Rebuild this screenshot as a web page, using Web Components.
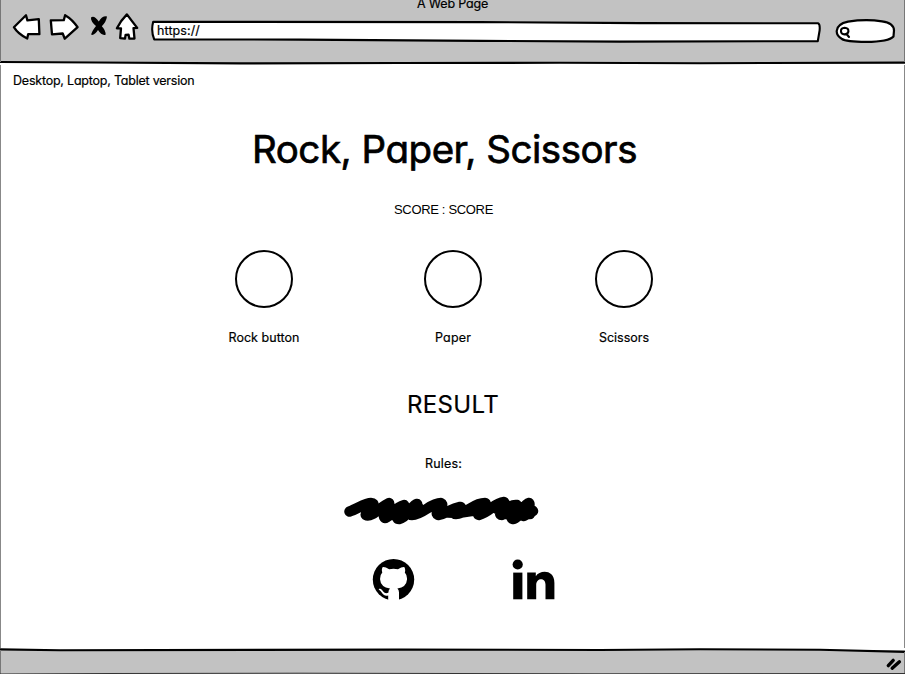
<!DOCTYPE html>
<html lang="en">
<head>
<meta charset="utf-8">
<title>A Web Page</title>
<style>
html,body{margin:0;height:674px;overflow:hidden;background:#fff}
body{font-family:Inter,"Liberation Sans",sans-serif;color:#000}
</style>
</head>
<body>
<wire-window></wire-window>
<script>
function define(name, html, ready) {
  const t = document.createElement('template');
  t.innerHTML = html;
  customElements.define(name, class extends HTMLElement {
    constructor() {
      super();
      this.attachShadow({mode: 'open'}).append(t.content.cloneNode(true));
    }
    connectedCallback() { if (ready) ready.call(this); }
  });
}

// One line of label text, tracked so that it spans the given width.
define('wire-text', `
<style>
:host{display:block;white-space:nowrap;font-size:12.5px;line-height:18px;font-feature-settings:"cv11" 1;-webkit-text-stroke:.2px #000}
:host([plain]){font-family:"Liberation Sans",sans-serif;font-size:13px;-webkit-text-stroke:0}
span{display:inline-block;white-space:pre}
</style><span><slot></slot></span>`, function () {
  const want = +this.getAttribute('span');
  this.style.width = want + 'px';
  const s = this.shadowRoot.querySelector('span');
  const n = this.textContent.length;
  s.style.letterSpacing = '0px';
  const w = s.getBoundingClientRect().width;
  if (w) s.style.letterSpacing = ((want - w) / n) + 'px';
});

define('wire-nav', `
<style>:host{display:block;width:128px;height:32px}svg{display:block}</style>
<svg width="128" height="32" viewBox="12 11 128 32" fill="#fff" stroke="#000" stroke-width="2.3" stroke-linejoin="round">
<path d="M13.9 27.2 26 15.3 27.4 20.4 38.8 19.1 39.4 34.2 28.2 34.1 27.2 38.5Q18 34 13.9 27.2Z"/>
<path d="M50.8 20.4 63.8 20.1 65.1 15.2Q72.3 19.4 77.6 27.2L64.8 38.7 62.7 33.5 52 34.3Z"/>
<path d="M126.9 14.4Q121 20.3 116.9 28.3L121 28.4 120.2 38.2 125 38.7 125.6 34.8 128.5 34.6 129.4 38.7 134.5 38.6 133.5 28.2 137.2 27.9Q131.8 21 126.9 14.4Z"/>
<path fill="#000" stroke="none" d="M91 17.4Q94.3 14.9 98.8 21.6 102 15.7 107 16.4 106.3 21.6 101.8 26.2 105.8 30.2 105.6 34.7 101.8 36 98 30.1 94.7 35.5 91.3 34.8 90.9 32.6 96 26 90.5 21.2 91 17.4Z"/>
</svg>`);

define('wire-address', `
<style>
:host{display:grid;width:672px;height:24px;grid-template:24px/672px}
svg,div{grid-area:1/1}div{padding:2px 0 0 7px}
</style>
<svg width="672" height="24" viewBox="150 20 672 24"><path fill="#fff" stroke="#000" stroke-width="2.1" stroke-linejoin="round" d="M153.2 21.8 480 22.1 640 23.1 818 23.3Q820.2 24 819.6 30.5L817.8 41.2 620 41.6 480 40.9 300 39.6 154.2 39.4Q150.7 31 153.2 21.8Z"/></svg>
<div><slot></slot></div>`);

define('wire-search', `
<style>:host{display:block;width:62px;height:26px}svg{display:block}</style>
<svg width="62" height="26" viewBox="834 18 62 26"><path fill="#fff" stroke="#000" stroke-width="2.2" d="M848 21.6Q866 18.8 882 21.3 894 23 894 30.5L893.5 36.4Q889 41.5 866 41.9 846 41.8 842 39 836.5 36 836.7 31 837 24 848 21.6Z"/>
<path fill="none" stroke="#000" stroke-width="2.1" stroke-linecap="round" d="M841 31.5Q840.6 28 844.7 27.8 848.7 28 848.4 31.6 847.6 34.4 844.5 34.4 841.2 34.2 841 31.5M846.5 34 849 37"/></svg>`);

define('wire-toolbar', `
<style>
:host{display:grid;height:65px;grid-template:65px/905px;overflow:hidden}
:host>*{grid-area:1/1}
.stack{display:flex;flex-direction:column}
.top{display:flex;height:11px;align-items:flex-end;justify-content:center}
.top wire-text{margin-bottom:-2px}
.row{display:flex;align-items:flex-start;padding-left:12px}
wire-address{margin:9px 0 0 10px}wire-search{margin:7px 0 0 12px}
</style>
<svg width="905" height="65"><path fill="#c2c2c2" d="M0 0H905V63H0Z"/><path fill="none" stroke="#000" stroke-width="2.1" d="M0 62 95 62.5 240 63.4 400 63 560 62.8 700 63.2 905 62.6"/><path d="M.5 0V62M904.5 0V62" stroke="#777"/></svg>
<div class="stack"><div class="top"><wire-text span="71">A Web Page</wire-text></div>
<div class="row"><wire-nav></wire-nav><wire-address><wire-text span="43">https://</wire-text></wire-address><wire-search></wire-search></div></div>`);

define('wire-choice', `
<style>
:host{display:flex;flex-direction:column;align-items:center;width:100px}
button{box-sizing:border-box;width:58px;height:58px;padding:0;border:2px solid #000;border-radius:50%;background:none;margin-bottom:21px}
</style><button></button><slot></slot>`);

define('wire-scribble', `
<style>:host{display:block;width:196px;height:30px}svg{display:block}</style>
<svg width="196" height="30" viewBox="344 496 196 30" fill="none" stroke="#000" stroke-width="10.5" stroke-linecap="round" stroke-linejoin="round"><path d="M349.5 511.5C357 509 365 503 371 503 379 503 364 513 366 515 371 518 382 506 389 503 391 505 381 515 385 518 389 518 395 507 404 505 406 508 393 519 399 519 408 517 412 505 417 504 419 507 407 515 412 515 423 515 430 503 441 503 446 505 433 513 438 515 448 513 450 509 460 507 465 508 450 514 456 514 467 514 473 503 485 503 489 505 475 514 479 515 490 512 494 503 504 502 507 505 496 515 502 515 507 513 508 504 517 505 520 507 507 517 513 519 520 518 523 504 529 503 532 507 519 515 524 516 529 514 530 510 533 511M380 510 419 508M497 509 532 510M371 513 384 510M438 512 458 513 478 510M387 515 414 514M504 514 530 514"/></svg>`);

define('wire-socials', `
<style>:host{display:flex;gap:97px;width:184px;height:43px}svg{display:block}</style>
<svg width="43" height="43" viewBox="372 558 43 43"><circle cx="393.5" cy="579.6" r="20.7"/><path fill="#fff" d="M382.5 567.2Q385 566.7 389.1 569.3 393.5 568.2 398 569.3 402.2 566.7 404.5 567.2 405.7 570 404.8 572.6 407.4 575.5 407 579.6 406.5 587.3 397.4 588.5 399.2 590.2 399 593.2L399 602 388.2 602 388.2 595.5Q383.7 596.5 381.7 592.6 380.8 590.7 379 589.7 378 588.4 380.3 588.8 382 589.3 383.2 591.4 385 594 388.3 592.7 388.5 590 390 588.5 380.6 587.3 380.1 579.6 379.8 575.2 382.3 572.6 381.3 569.8 382.5 567.2Z"/></svg>
<svg width="44" height="43" viewBox="512.3 558 44 43"><circle cx="518" cy="564.5" r="5.1"/><path d="M513.5 572.6H522.7V599.3H513.5Z"/><path d="M527.5 572.6H536.1V576.2C540 570 554.7 569 554.7 583V599.3H545.8V584.6C545.8 577 536.5 577.6 536.5 584.8V599.3H527.5Z"/></svg>`);

define('wire-page', `
<style>
:host{display:flex;flex-direction:column;box-sizing:border-box;height:583px;padding-top:7px;border:solid #888;border-width:0 1px}
.note{margin-left:12px}
.title{font-size:38.5px;line-height:48px;-webkit-text-stroke:.7px #000;margin:35px 0 0 251px}
.score{margin:28px 0 0 393px}
.choices{display:flex;margin:31px 0 0 213px}
.choices :nth-child(2){margin:0 71px 0 89px}
.result{font-size:24px;line-height:30px;margin:43px 0 0 406px}
.rules{margin:35px 0 0 424px}
wire-scribble{margin:23px 0 0 343px}
wire-socials{margin:32px 0 0 371px}
</style>
<wire-text class="note" span="181.5">Desktop, Laptop, Tablet version</wire-text>
<wire-text class="title" span="385">Rock, Paper, Scissors</wire-text>
<wire-text class="score" plain span="99">SCORE : SCORE</wire-text>
<div class="choices">
<wire-choice><wire-text span="71">Rock button</wire-text></wire-choice>
<wire-choice><wire-text span="36">Paper</wire-text></wire-choice>
<wire-choice><wire-text span="50">Scissors</wire-text></wire-choice>
</div>
<wire-text class="result" span="92">RESULT</wire-text>
<wire-text class="rules" span="37">Rules:</wire-text>
<wire-scribble></wire-scribble>
<wire-socials></wire-socials>`);

define('wire-status', `
<style>:host{display:block;height:26px}svg{display:block}</style>
<svg width="905" height="26" viewBox="0 648 905 26"><path fill="#c2c2c2" d="M0 650H905V674H0Z"/><path fill="none" stroke="#000" stroke-width="2.1" d="M0 649.4 60 650.2 400 649.6 600 650 700 649.3 820 649.8 905 651.9"/><path stroke="#777" d="M.5 650V674M904.5 652V674"/><path stroke="#333" fill="none" d="M0 674 110 673.5 300 673.2 600 673.8 905 673.5"/><path stroke="#000" stroke-width="3.4" stroke-linecap="round" d="M888.3 665.6 893.2 660.4M892.2 668.2 899.4 661.8"/></svg>`);

define('wire-window', `
<style>:host{display:flex;flex-direction:column;width:905px;height:674px;background:#fff}</style>
<wire-toolbar></wire-toolbar><wire-page></wire-page><wire-status></wire-status>`);
</script>
</body>
</html>
